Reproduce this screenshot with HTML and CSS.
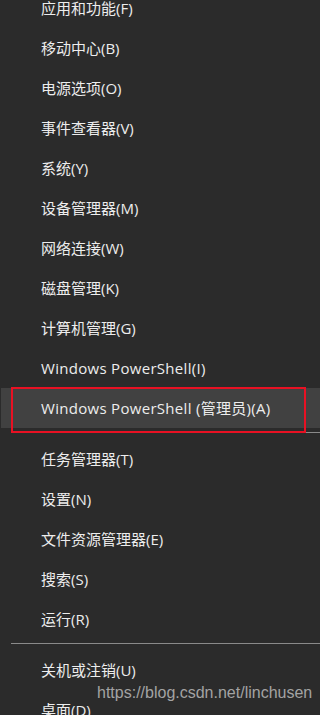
FILE: index.html
```html
<!DOCTYPE html>
<html lang="zh-CN">
<head>
  <meta charset="UTF-8">
  <meta name="viewport" content="width=device-width, initial-scale=1.0">
  <title>Win+X 菜单</title>
  <link rel="stylesheet" href="styles.css">
</head>
<body>

  <ul class="menu">
    <li class="item">应用和功能(F)</li>
    <li class="item">移动中心(B)</li>
    <li class="item">电源选项(O)</li>
    <li class="item">事件查看器(V)</li>
    <li class="item">系统(Y)</li>
    <li class="item">设备管理器(M)</li>
    <li class="item">网络连接(W)</li>
    <li class="item">磁盘管理(K)</li>
    <li class="item">计算机管理(G)</li>
    <li class="item latin">Windows PowerShell(I)</li>
    <li class="item latin active">Windows PowerShell (管理员)(A)</li>
    <li class="sep"></li>
    <li class="item">任务管理器(T)</li>
    <li class="item">设置(N)</li>
    <li class="item">文件资源管理器(E)</li>
    <li class="item">搜索(S)</li>
    <li class="item">运行(R)</li>
    <li class="sep"></li>
    <li class="item">关机或注销(U)</li>
    <li class="item">桌面(D)</li>
  </ul>

  <div class="mark">https://blog.csdn.net/linchusen</div>

</body>
</html>
```

FILE: styles.css
```css
*, *::before, *::after {
  margin: 0;
  padding: 0;
  box-sizing: border-box;
}

body {
  background-color: #2b2b2b;
  color: #ededed;
  font-family: "Open Sans", "Noto Sans CJK SC", sans-serif;
  font-size: 15px;
  height: 715px;
  overflow: hidden;
  position: relative;
}

.menu {
  list-style: none;
  margin-top: -12px;
}

.item {
  height: 40px;
  line-height: 40px;
  padding-left: 41px;
  white-space: nowrap;
}

/* Segoe UI runs a little wider than Open Sans */
.latin {
  letter-spacing: 0.3px;
}

.active {
  background-color: #414141;
  margin-left: 1px;
  padding-left: 40px;
  position: relative;
}

/* red marker drawn over the selected row */
.active::after {
  content: "";
  position: absolute;
  left: 10px;
  top: -1px;
  width: 295px;
  height: 46px;
  border: 2px solid #e81123;
}

.sep {
  height: 11px;
  margin-left: 11px;
  border-top: 4px solid transparent;
  background: linear-gradient(#8a8a8a, #8a8a8a) no-repeat top / 100% 1px;
}

.mark {
  position: absolute;
  left: 97px;
  top: 684px;
  font-family: "Liberation Sans", Arial, sans-serif;
  font-size: 16px;
  color: #a3a3a3;
}
```
